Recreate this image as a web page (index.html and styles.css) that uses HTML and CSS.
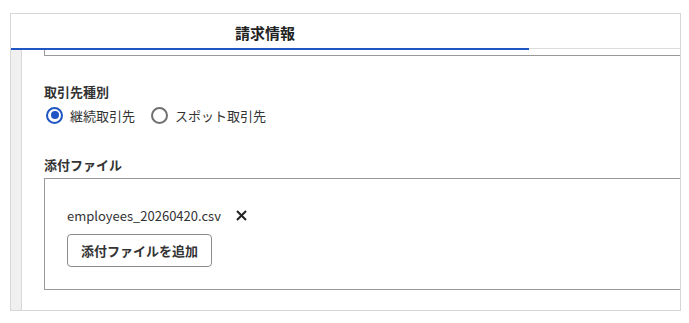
FILE: index.html
```html
<!DOCTYPE html>
<html lang="ja">
<head>
    <meta charset="UTF-8">
    <meta name="viewport" content="width=device-width, initial-scale=1.0">
    <title>請求情報</title>
    <link rel="stylesheet" href="styles.css">
</head>
<body>
    <div class="panel">
        <div class="tabs">
            <div class="tab active">請求情報</div>
            <div class="tab-rest"></div>
        </div>
        <div class="panel-body">
            <div class="side"></div>
            <div class="content">
                <div class="prev-box"></div>

                <div class="field field-type">
                    <div class="field-label">取引先種別</div>
                    <div class="radio-row">
                        <label class="radio">
                            <span class="radio-mark checked"></span>
                            <span>継続取引先</span>
                        </label>
                        <label class="radio">
                            <span class="radio-mark"></span>
                            <span>スポット取引先</span>
                        </label>
                    </div>
                </div>

                <div class="field field-files">
                    <div class="field-label">添付ファイル</div>
                    <div class="attach-box">
                        <div class="file-row">
                            <span class="file-name">employees_20260420.csv</span>
                            <button type="button" class="file-remove" aria-label="削除">
                                <svg width="11" height="11" viewBox="0 0 11 11">
                                    <path d="M1 1 L10 10 M10 1 L1 10" stroke="#222" stroke-width="2" stroke-linecap="butt" fill="none"/>
                                </svg>
                            </button>
                        </div>
                        <button type="button" class="add-button">添付ファイルを追加</button>
                    </div>
                </div>
            </div>
        </div>
    </div>
</body>
</html>
```

FILE: styles.css
```css
/* form panel with tab header */
body {
    margin: 0;
    padding: 13px 0 0 10px;
    font-family: "Noto Sans CJK JP", "Noto Sans", sans-serif;
    color: #333;
    background: #fff;
}
.panel {
    width: 669px;
    height: 296px;
    border: 1px solid #d6d6d6;
    overflow: hidden;
    display: flex;
    flex-direction: column;
}
.tabs {
    display: flex;
    height: 36px;
    flex-shrink: 0;
}
.tab {
    width: 518px;
    box-sizing: border-box;
    display: flex;
    align-items: center;
    justify-content: center;
    font-size: 15px;
    font-weight: bold;
    color: #222;
    padding-top: 2px;
    padding-right: 10px;
}
.tab.active {
    border-bottom: 2px solid #1f56c3;
}
.tab-rest {
    flex: 1;
    border-bottom: 1px solid #dcdcdc;
    margin-bottom: 1px;
}
.panel-body {
    flex: 1;
    display: flex;
}
.side {
    width: 10px;
    background-color: #f0f0f0;
    border-right: 1px solid #d9d9d9;
}
.content {
    flex: 1;
    padding-left: 22px;
}
.prev-box {
    height: 5px;
    border-left: 1px solid #999;
    border-bottom: 1px solid #999;
}
.field-label {
    font-size: 13px;
    font-weight: bold;
    line-height: 19px;
    color: #333;
}
.field-type {
    margin-top: 26px;
}
.radio-row {
    display: flex;
    gap: 14px;
    margin-top: 4px;
    height: 20px;
    align-items: center;
}
.radio {
    display: flex;
    align-items: center;
    gap: 7px;
    font-size: 13px;
    color: #333;
    padding-left: 2px;
}
.radio-mark {
    width: 17px;
    height: 17px;
    box-sizing: border-box;
    border: 2px solid #707070;
    border-radius: 50%;
    position: relative;
}
.radio-mark.checked {
    border-color: #1f56c3;
}
.radio-mark.checked::after {
    content: "";
    position: absolute;
    left: 2.5px;
    top: 2.5px;
    width: 8px;
    height: 8px;
    border-radius: 50%;
    background-color: #1f56c3;
}
.field-files {
    margin-top: 30px;
}
.attach-box {
    margin-top: 4px;
    border: 1px solid #999;
    border-right: none;
    padding: 26px 0 22px 22px;
}
.file-row {
    display: flex;
    align-items: center;
    height: 20px;
    gap: 15px;
    margin-bottom: 9px;
}
.file-name {
    font-size: 13px;
    color: #333;
}
.file-remove {
    background: none;
    border: none;
    padding: 0;
    width: 11px;
    height: 11px;
    display: flex;
    cursor: pointer;
}
.add-button {
    height: 33px;
    padding: 0 13px;
    background-color: #fff;
    border: 1px solid #8c8c8c;
    border-radius: 4px;
    font-family: "Noto Sans CJK JP", "Noto Sans", sans-serif;
    font-size: 13px;
    font-weight: bold;
    color: #333;
    cursor: pointer;
}
```
